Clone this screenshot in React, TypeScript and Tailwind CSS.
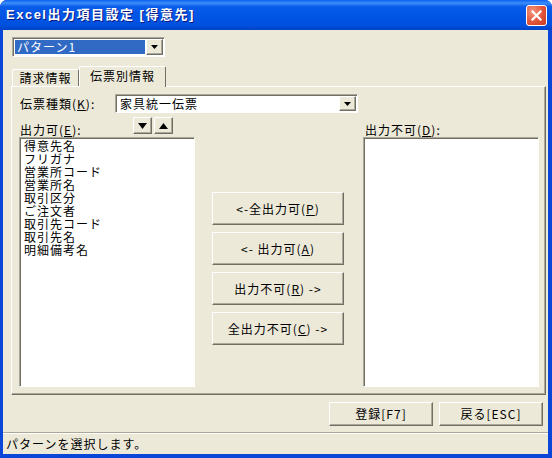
import React from 'react';

const raised =
  'bg-[#ECE9D8] border border-t-white border-l-white border-r-[#716F64] border-b-[#716F64] shadow-[inset_-1px_-1px_0_#ACA899]';
const sunken =
  'bg-white border border-t-[#ACA899] border-l-[#ACA899] border-r-white border-b-white shadow-[inset_1px_1px_0_#716F64]';

const U = ({ c }: { c: string }) => <span className="underline">{c}</span>;

const DropButton = () => (
  <div className={`${raised} w-[17px] h-full flex items-center justify-center`}>
    <svg width="7" height="4" viewBox="0 0 7 4">
      <path d="M0 0h7L3.5 4z" fill="#000" />
    </svg>
  </div>
);

const ArrowButton = ({ up }: { up?: boolean }) => (
  <div className={`${raised} w-[19px] h-[17px] flex items-center justify-center`}>
    <svg width="9" height="6" viewBox="0 0 9 6">
      <path d={up ? 'M0 6h9L4.5 0z' : 'M0 0h9L4.5 6z'} fill="#000" />
    </svg>
  </div>
);

const MoveButton = ({ children }: { children: React.ReactNode }) => (
  <div className={`${raised} w-[132px] h-[33px] flex items-center justify-center whitespace-pre`}>
    {children}
  </div>
);

const outputItems = [
  '得意先名',
  'フリガナ',
  '営業所コード',
  '営業所名',
  '取引区分',
  'ご注文者',
  '取引先コード',
  '取引先名',
  '明細備考名',
];

export default function App() {
  return (
    <div className="w-[552px] h-[458px] flex flex-col bg-[#0A46D8] rounded-t-[7px] overflow-hidden font-['Noto_Sans_CJK_JP',sans-serif] text-[12px] tracking-[1px] text-black">
      {/* title bar */}
      <div className="h-[30px] flex items-center justify-between pl-[6px] pr-[5px] bg-[linear-gradient(to_bottom,#0A5FF0_0%,#3D8EF8_10%,#0A5CEA_22%,#0055E5_55%,#0050DD_85%,#0042C6_100%)]">
        <span className="text-white font-bold text-[13px] tracking-[1.5px] font-['Liberation_Sans','Noto_Sans_CJK_JP',sans-serif] [text-shadow:1px_1px_0_#0A1883]">
          Excel出力項目設定 [得意先]
        </span>
        <div className="w-[21px] h-[21px] rounded-[3px] border border-white bg-[radial-gradient(circle_at_30%_30%,#F3957A,#E0553A_55%,#C8391E)] flex items-center justify-center">
          <svg width="11" height="11" viewBox="0 0 11 11">
            <path d="M1.5 1.5l8 8M9.5 1.5l-8 8" stroke="#fff" strokeWidth="2.2" strokeLinecap="square" />
          </svg>
        </div>
      </div>

      {/* body */}
      <div className="flex-1 flex flex-col bg-[#ECE9D8] ml-[3px] mr-[4px] mb-[4px]">
        {/* pattern combo */}
        <div className={`${sunken} mt-[7px] ml-[9px] w-[153px] h-[20px] flex items-stretch p-[1px] pl-[2px]`}>
          <div className="flex-1 bg-[#316AC5] text-white leading-[14px] pl-[2px] my-[1px] mr-[1px]">パターン1</div>
          <DropButton />
        </div>

        {/* tabs */}
        <div className="mt-[9px] ml-[8px] h-[20px] flex items-end">
          <div className="ml-[1px] w-[67px] h-[17px] border-t border-l border-white border-r border-r-[#716F64] rounded-t-[2px] flex items-center justify-center leading-none">
            請求情報
          </div>
          <div className="relative z-10 -mb-[1px] w-[87px] h-[21px] bg-[#ECE9D8] border-t border-l border-white border-r border-r-[#716F64] rounded-t-[2px] flex items-start justify-center pt-[2px] leading-[14px]">
            伝票別情報
          </div>
        </div>

        {/* panel */}
        <div className="ml-[8px] w-[535px] h-[309px] border border-t-white border-l-white border-r-[#716F64] border-b-[#716F64] shadow-[inset_-1px_-1px_0_#ACA899] flex flex-col">
          <div className="mt-[7px] flex items-center h-[19px]">
            <span className="ml-[8px] w-[95px]">
              伝票種類(<U c="K" />):
            </span>
            <div className={`${sunken} w-[243px] h-[19px] flex items-stretch p-[1px]`}>
              <div className="flex-1 pl-[3px] leading-[15px]">家具統一伝票</div>
              <DropButton />
            </div>
          </div>

          <div className="mt-[4px] flex">
            {/* left column */}
            <div className="ml-[7px] w-[176px] flex flex-col">
              <div className="h-[20px] flex items-start">
                <span className="self-end leading-[14px] ml-[1px] w-[113px]">
                  出力可(<U c="E" />):
                </span>
                <ArrowButton />
                <div className="ml-[2px]">
                  <ArrowButton up />
                </div>
              </div>
              <div className={`${sunken} h-[250px] pt-[1px] pl-[4px]`}>
                {outputItems.map((t) => (
                  <div key={t} className="leading-[13px] h-[13px]">
                    {t}
                  </div>
                ))}
              </div>
            </div>

            {/* middle buttons */}
            <div className="ml-[17px] pt-[75px] flex flex-col gap-[7px]">
              <MoveButton>
                {'<-全出力可('}
                <U c="P" />)
              </MoveButton>
              <MoveButton>
                {'<- 出力可('}
                <U c="A" />)
              </MoveButton>
              <MoveButton>
                {'出力不可('}
                <U c="R" />
                {') ->'}
              </MoveButton>
              <MoveButton>
                {'全出力不可('}
                <U c="C" />
                {') ->'}
              </MoveButton>
            </div>

            {/* right column */}
            <div className="ml-[19px] w-[176px] flex flex-col">
              <div className="h-[20px] flex items-end">
                <span className="leading-[14px] ml-[2px]">
                  出力不可(<U c="D" />):
                </span>
              </div>
              <div className={`${sunken} h-[250px]`} />
            </div>
          </div>
        </div>

        {/* bottom buttons */}
        <div className="mt-[7px] flex justify-end gap-[6px] mr-[5px]">
          <div className={`${raised} w-[104px] h-[24px] flex items-center justify-center`}>登録[F7]</div>
          <div className={`${raised} w-[104px] h-[24px] flex items-center justify-center`}>戻る[ESC]</div>
        </div>

        {/* status bar */}
        <div className="mt-[6px] flex-1 border-t border-[#ACA899] shadow-[inset_0_1px_0_#fff] flex items-center pl-[3px]">
          パターンを選択します。
        </div>
      </div>
    </div>
  );
}
